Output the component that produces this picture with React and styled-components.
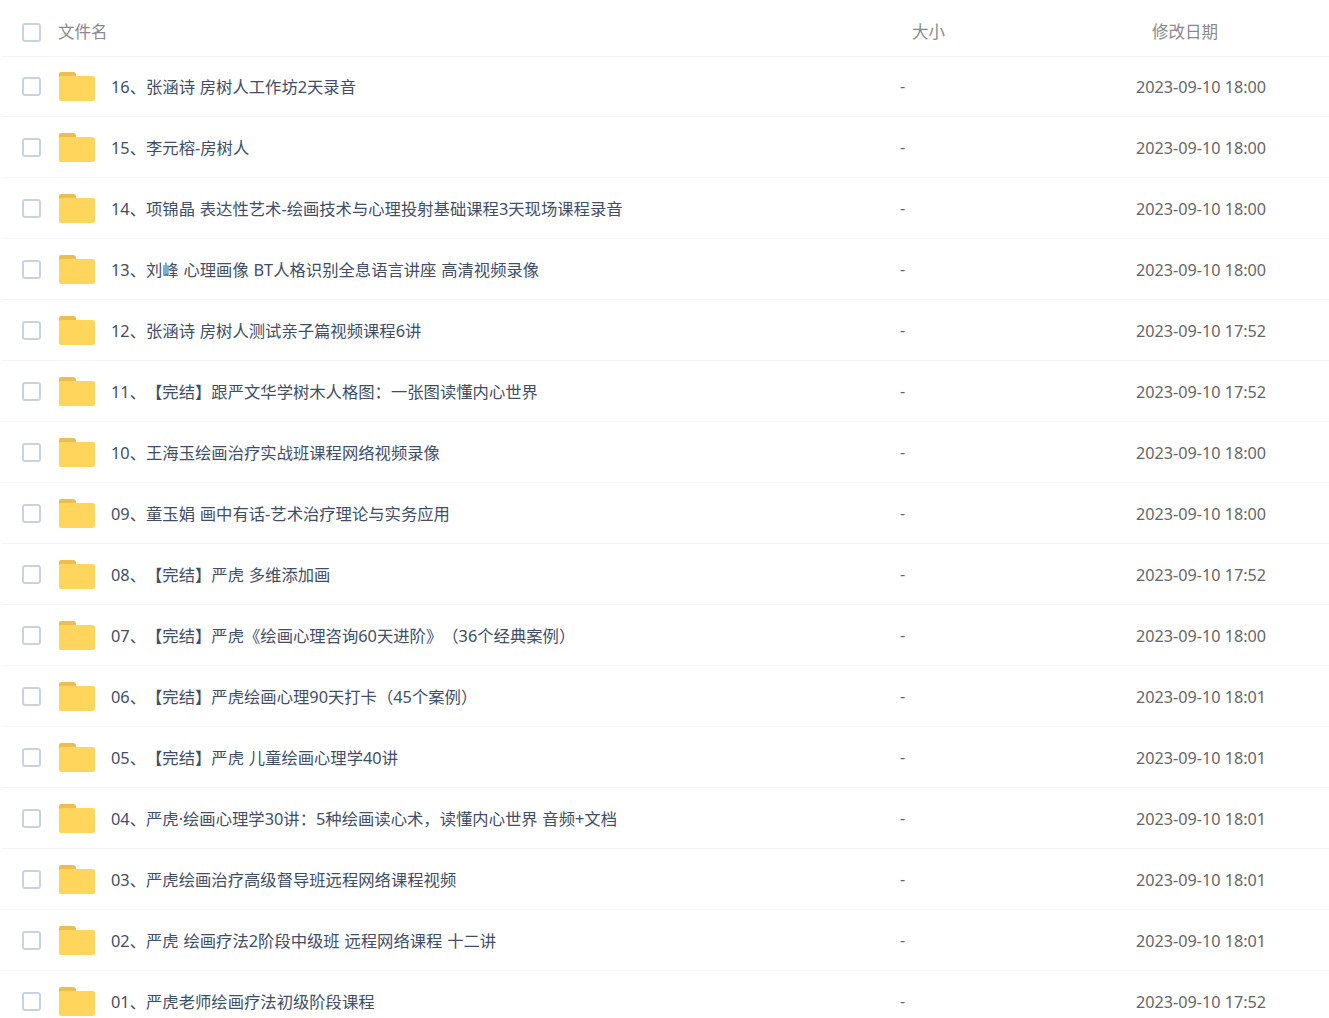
import React from "react";
import styled, { createGlobalStyle } from "styled-components";

const GlobalStyle = createGlobalStyle`
  html, body {
    margin: 0;
    height: 100%;
    overflow: hidden;
    background: #ffffff;
  }
`;

const Table = styled.div`
  font-family: "Noto Sans", "Noto Sans CJK SC", sans-serif;
  font-size: 16px;
  padding-left: 2px;
  text-spacing-trim: space-all;
`;

const HeaderRow = styled.div`
  display: grid;
  grid-template-columns: 56px 854px 240px 1fr;
  align-items: center;
  height: 47px;
  padding-top: 9px;
  border-bottom: 1px solid #f3f6fa;
  color: #8a8a8a;
  font-size: 16.5px;
`;

const HeaderLabel = styled.span`
  margin-bottom: 4px;
`;

const Row = styled.div`
  display: grid;
  grid-template-columns: 57px 52px 789px 236px 1fr;
  align-items: center;
  height: 60px;
  border-bottom: 1px solid #f3f6fa;

  ${HeaderRow} + & {
    margin-top: -1px;
  }
`;

const Check = styled.span`
  box-sizing: border-box;
  display: block;
  width: 19px;
  height: 19px;
  margin-left: 20px;
  border: 2px solid #c9d3e0;
  border-radius: 3px;
  background: #fff;
`;

const FolderIcon = styled.svg`
  display: block;
  width: 36px;
  height: 29px;
`;

const Name = styled.span`
  color: #424e67;
  font-size: 16.33px;
  word-spacing: 0.5px;
  white-space: nowrap;
`;

const Size = styled.span`
  color: #666;
`;

const Date = styled.span`
  color: #666;
  font-size: 16.2px;
  padding-top: 2px;
  white-space: nowrap;
`;

const files = [
  ["16、张涵诗 房树人工作坊2天录音", "2023-09-10 18:00"],
  ["15、李元榕-房树人", "2023-09-10 18:00"],
  ["14、项锦晶 表达性艺术-绘画技术与心理投射基础课程3天现场课程录音", "2023-09-10 18:00"],
  ["13、刘峰 心理画像 BT人格识别全息语言讲座 高清视频录像", "2023-09-10 18:00"],
  ["12、张涵诗 房树人测试亲子篇视频课程6讲", "2023-09-10 17:52"],
  ["11、【完结】跟严文华学树木人格图：一张图读懂内心世界", "2023-09-10 17:52"],
  ["10、王海玉绘画治疗实战班课程网络视频录像", "2023-09-10 18:00"],
  ["09、童玉娟 画中有话-艺术治疗理论与实务应用", "2023-09-10 18:00"],
  ["08、【完结】严虎 多维添加画", "2023-09-10 17:52"],
  ["07、【完结】严虎《绘画心理咨询60天进阶》（36个经典案例）", "2023-09-10 18:00"],
  ["06、【完结】严虎绘画心理90天打卡（45个案例）", "2023-09-10 18:01"],
  ["05、【完结】严虎 儿童绘画心理学40讲", "2023-09-10 18:01"],
  ["04、严虎·绘画心理学30讲：5种绘画读心术，读懂内心世界 音频+文档", "2023-09-10 18:01"],
  ["03、严虎绘画治疗高级督导班远程网络课程视频", "2023-09-10 18:01"],
  ["02、严虎 绘画疗法2阶段中级班 远程网络课程 十二讲", "2023-09-10 18:01"],
  ["01、严虎老师绘画疗法初级阶段课程", "2023-09-10 17:52"],
];

const Folder = () => (
  <FolderIcon viewBox="0 0 36 29">
    <path d="M0 2a2 2 0 0 1 2-2h12a3 3 0 0 1 3 3v2H0z" fill="#ecbd50" />
    <path d="M0 6a2 2 0 0 1 2-2h32a2 2 0 0 1 2 2v21a2 2 0 0 1-2 2H2a2 2 0 0 1-2-2z" fill="#ffd55c" />
  </FolderIcon>
);

export default function App() {
  return (
    <>
      <GlobalStyle />
      <Table>
        <HeaderRow>
          <Check />
          <HeaderLabel>文件名</HeaderLabel>
          <HeaderLabel>大小</HeaderLabel>
          <HeaderLabel>修改日期</HeaderLabel>
        </HeaderRow>
        {files.map(([name, date]) => (
          <Row key={name}>
            <Check />
            <Folder />
            <Name>{name}</Name>
            <Size>-</Size>
            <Date>{date}</Date>
          </Row>
        ))}
      </Table>
    </>
  );
}
